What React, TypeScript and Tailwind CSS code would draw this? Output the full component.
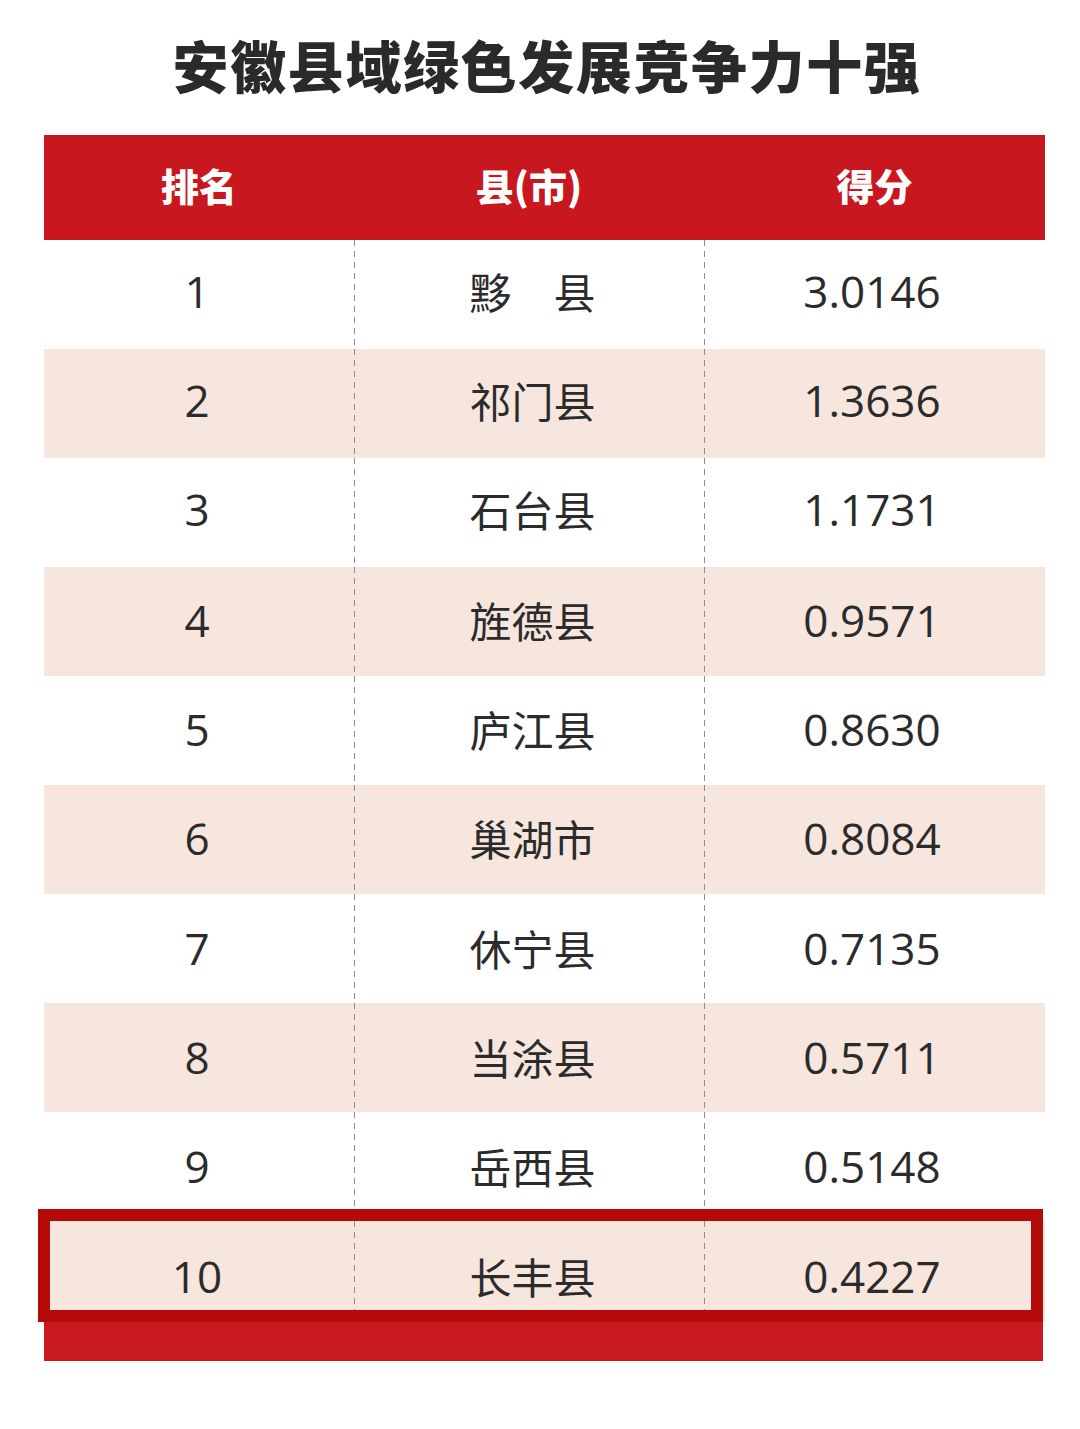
const rows: [string, string, string][] = [
  ['1', '黟　县', '3.0146'],
  ['2', '祁门县', '1.3636'],
  ['3', '石台县', '1.1731'],
  ['4', '旌德县', '0.9571'],
  ['5', '庐江县', '0.8630'],
  ['6', '巢湖市', '0.8084'],
  ['7', '休宁县', '0.7135'],
  ['8', '当涂县', '0.5711'],
  ['9', '岳西县', '0.5148'],
  ['10', '长丰县', '0.4227'],
];

function Divider() {
  return (
    <div className="bg-[repeating-linear-gradient(to_bottom,#8e8e8e_0px,#8e8e8e_6px,transparent_6px,transparent_11px)]" />
  );
}

export default function App() {
  return (
    <div className="min-h-[1429px] w-[1080px] bg-white font-['Noto_Sans_CJK_SC',sans-serif] text-[#2b2b2b]">
      {/* Title */}
      <div className="flex h-[135px] items-center justify-center pb-[8px]">
        <h1 className="pl-[14px] text-[56px] font-black leading-none tracking-[1.6px] text-[#2a2a2a]">
          安徽县域绿色发展竞争力十强
        </h1>
      </div>

      <div className="ml-[44px] w-[1001px]">
        {/* Header */}
        <div className="grid h-[105px] grid-cols-[310px_350px_341px] items-center bg-[#c8171e] pb-[6px] text-[38px] font-black leading-none text-white">
          <div className="text-center">排名</div>
          <div className="text-center">县(市)</div>
          <div className="text-center">得分</div>
        </div>

        {/* Rows */}
        {rows.map(([rank, name, score], i) => {
          const last = i === rows.length - 1;
          const cell =
            'flex items-center justify-center ' +
            (last ? 'pt-[8px]' : i > 5 ? 'pb-[2px]' : i > 2 ? 'pb-[4px]' : 'pb-[7px]');
          return (
            <div
              key={rank}
              className={
                'relative grid grid-cols-[310px_1px_349px_1px_340px] ' +
                (i % 2 === 1 ? 'bg-[#f6e6dd] ' : 'bg-white ') +
                (last ? 'h-[101px]' : 'h-[109px]')
              }
            >
              <div className={cell}>
                <span className="pr-[4px] font-['Open_Sans','Noto_Sans_CJK_SC',sans-serif] text-[44px] leading-none">{rank}</span>
              </div>
              <Divider />
              <div className={cell}>
                <span className="pl-[6px] text-[42px] leading-none">{name}</span>
              </div>
              <Divider />
              <div className={cell}>
                <span className="pr-[6px] font-['Open_Sans','Noto_Sans_CJK_SC',sans-serif] text-[44px] leading-none">{score}</span>
              </div>
              {last && (
                <div className="pointer-events-none absolute -top-[12px] -left-[6px] right-[2px] bottom-0 border-[12px] border-[#b50a0a]" />
              )}
            </div>
          );
        })}

        {/* Footer bar */}
        <div className="mr-[2px] h-[39px] bg-[#c8191f]" />
      </div>
    </div>
  );
}
